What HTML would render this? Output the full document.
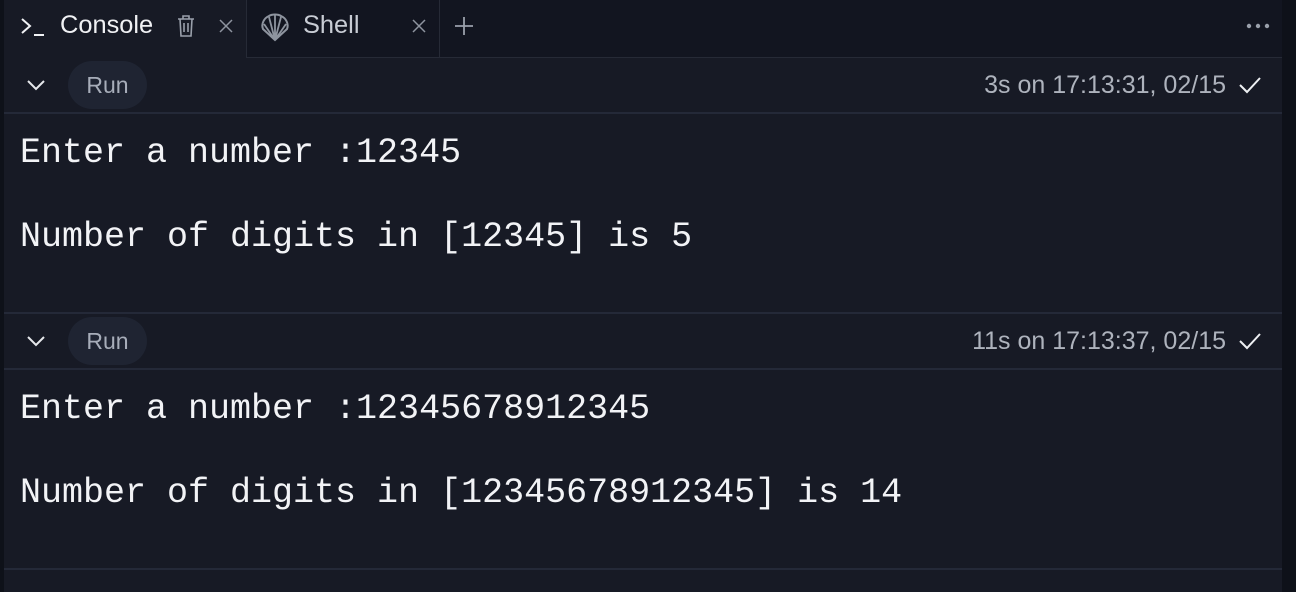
<!DOCTYPE html>
<html><head><meta charset="utf-8"><style>
*{margin:0;padding:0;box-sizing:border-box}
body{width:1296px;height:592px;background:#0e1119;position:relative;overflow:hidden;font-family:"Liberation Sans",sans-serif}
.panel{position:absolute;left:4px;top:0;width:1278px;height:592px;background:#171a25}
.tabbar{position:absolute;left:0;top:0;width:1278px;height:58px;background:#121520}
.tab1{position:absolute;left:0;top:0;width:242px;height:58px;background:#171a25}
.tab2{position:absolute;left:242px;top:0;width:194px;height:58px;border-left:1px solid #262a36;border-right:1px solid #262a36;border-bottom:1px solid #262a36}
.tabline{position:absolute;left:436px;top:57px;width:842px;height:1px;background:#262a36}
.t{position:absolute;color:#f0f1f4;font-size:25.4px}
.hl{position:absolute;left:0;width:1278px;height:2px;background:#242938}
.run{position:absolute;left:64px;width:79px;height:48px;border-radius:24px;background:#1f2432;color:#a7adb9;font-size:23px;text-align:center;line-height:48px}
.ts{position:absolute;right:56px;color:#aeb3bd;font-size:25px}
.mono{position:absolute;left:16px;font-family:"Liberation Mono",monospace;font-size:35px;color:#f2f3f6;white-space:pre}
svg{position:absolute}
</style></head><body>
<div class="panel">
<div class="tabbar"></div>
<div class="tab1"></div>
<div class="tab2"></div>
<div class="tabline"></div>
<svg style="left:16px;top:16px" width="26" height="22" viewBox="0 0 26 22"><path d="M2 3l8 7-8 7" fill="none" stroke="#f0f1f4" stroke-width="2"/><path d="M14 19h10" stroke="#f0f1f4" stroke-width="2"/></svg>
<div class="t" style="left:56px;top:11px">Console</div>
<svg style="left:172px;top:14px" width="20" height="24" viewBox="0 0 20 24"><path d="M2 5h16M7 5V2h6v3M4 5l1 17h10l1-17M8 9v9M12 9v9" fill="none" stroke="#9aa0ab" stroke-width="1.6"/></svg>
<svg style="left:214px;top:18px" width="16" height="16"><path d="M2 2l12 12M14 2L2 14" stroke="#8e949f" stroke-width="1.5"/></svg>
<svg style="left:256px;top:12px" width="30" height="30" viewBox="0 0 30 30"><path d="M15 28L3 17C1 12 4 6 9 4c3-2 9-2 12 0 5 2 8 8 6 13z" fill="none" stroke="#8e949f" stroke-width="2"/><path d="M15 28L9 5M15 28V3M15 28l6-23M15 28L4 12M15 28l11-16" stroke="#8e949f" stroke-width="1.8"/></svg>
<div class="t" style="left:299px;top:11px;color:#c8ccd4">Shell</div>
<svg style="left:407px;top:18px" width="16" height="16"><path d="M2 2l12 12M14 2L2 14" stroke="#8e949f" stroke-width="1.5"/></svg>
<svg style="left:450px;top:16px" width="20" height="20"><path d="M10 1v18M1 10h18" stroke="#9aa0ab" stroke-width="1.8"/></svg>
<svg style="left:1242px;top:22px" width="26" height="8"><circle cx="3" cy="4" r="2.2" fill="#9aa0ab"/><circle cx="12" cy="4" r="2.2" fill="#9aa0ab"/><circle cx="21" cy="4" r="2.2" fill="#9aa0ab"/></svg>

<svg style="left:22px;top:78px" width="20" height="14"><path d="M2 3l8 8 8-8" fill="none" stroke="#e6e8ec" stroke-width="2"/></svg>
<div class="run" style="top:61px">Run</div>
<div class="ts" style="top:71px">3s on 17:13:31, 02/15</div>
<svg style="left:1234px;top:75px" width="24" height="20"><path d="M2 10l7 7L22 3" fill="none" stroke="#eef0f3" stroke-width="2"/></svg>
<div class="hl" style="top:112px"></div>
<div class="mono" style="top:133px">Enter a number :12345</div>
<div class="mono" style="top:217px">Number of digits in [12345] is 5</div>
<div class="hl" style="top:312px"></div>

<svg style="left:22px;top:334px" width="20" height="14"><path d="M2 3l8 8 8-8" fill="none" stroke="#e6e8ec" stroke-width="2"/></svg>
<div class="run" style="top:317px">Run</div>
<div class="ts" style="top:327px">11s on 17:13:37, 02/15</div>
<svg style="left:1234px;top:331px" width="24" height="20"><path d="M2 10l7 7L22 3" fill="none" stroke="#eef0f3" stroke-width="2"/></svg>
<div class="hl" style="top:368px"></div>
<div class="mono" style="top:389px">Enter a number :12345678912345</div>
<div class="mono" style="top:473px">Number of digits in [12345678912345] is 14</div>
<div class="hl" style="top:568px"></div>
</div>
</body></html>
